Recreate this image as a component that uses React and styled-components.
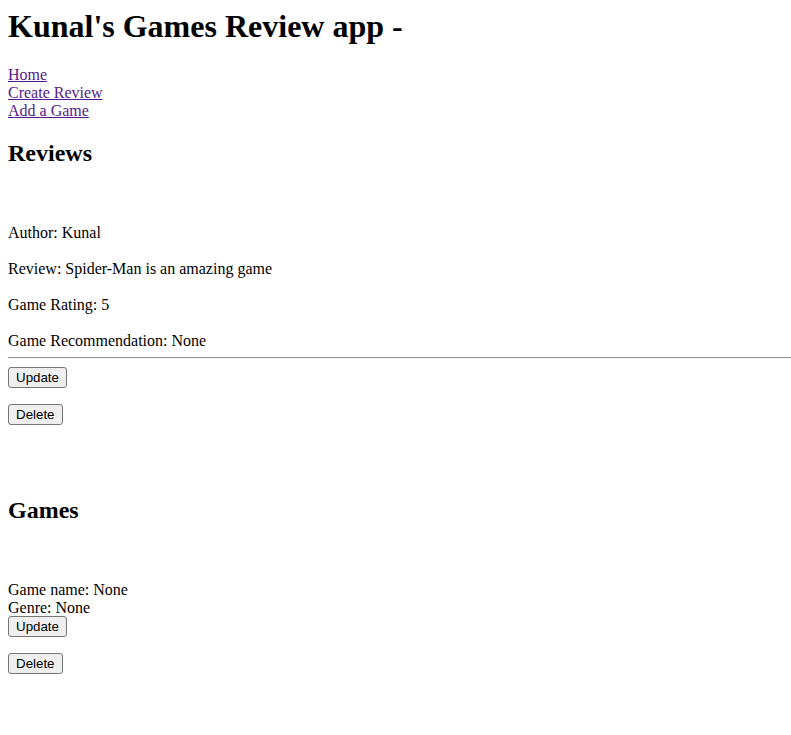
// react imports
import React from 'react';
// styled components import
import styled, { createGlobalStyle } from 'styled-components';

// global styles
const GlobalStyle = createGlobalStyle`
  body {
    margin: 0;
    background: #ffffff;
    color: #000000;
    font-family: "Liberation Serif", "Times New Roman", serif;
    font-size: 16px;
  }
`

// styled components
const Page = styled.div`
  display: flex;
  flex-flow: column nowrap;
  align-items: flex-start;
  padding: 8px 0 8px 8px;
`

const Title = styled.h1`
  margin: 0;
  font-size: 32px;
  line-height: 37px;
  font-weight: bold;
`

const Nav = styled.nav`
  display: flex;
  flex-flow: column nowrap;
  align-items: flex-start;
  margin-top: 20.6px;
`

const NavLink = styled.a`
  color: #551a8b;
  text-decoration: underline;
  line-height: 18px;
`

const SectionTitle = styled.h2`
  margin: ${props => props.$top}px 0 0;
  font-size: 24px;
  line-height: 28px;
  font-weight: bold;
`

const Card = styled.div`
  display: flex;
  flex-flow: column nowrap;
  align-items: flex-start;
  align-self: stretch;
  margin-top: ${props => props.$top}px;
  gap: ${props => props.$gap}px;
`

const Field = styled.p`
  margin: 0;
  line-height: ${props => props.$lh}px;
`

const Divider = styled.hr`
  align-self: stretch;
  margin: 6px 0 0;
  height: 0;
  border: none;
  border-top: 1px solid #9a9a9a;
  border-bottom: 1px solid #eeeeee;
`

const Actions = styled.div`
  display: flex;
  flex-flow: column nowrap;
  align-items: flex-start;
  gap: 16px;
  margin-top: ${props => props.$top}px;
`

const Button = styled.button`
  height: 21px;
  padding: 0 7px;
  background-color: #efefef;
  border: 1px solid #767676;
  border-radius: 3px;
  color: #000000;
  font-family: "Liberation Sans", Arial, sans-serif;
  font-size: 13.333px;
  line-height: 15px;
`

const reviews = [
  { author: 'Kunal', review: 'Spider-Man is an amazing game', rating: 5, recommendation: 'None' }
]

const games = [
  { name: 'None', genre: 'None' }
]

const App = () => {
  return (
    <>
      <GlobalStyle />
      <Page>
        <Title>Kunal's Games Review app -</Title>
        <Nav>
          <NavLink href="#">Home</NavLink>
          <NavLink href="#">Create Review</NavLink>
          <NavLink href="#">Add a Game</NavLink>
        </Nav>

        <SectionTitle $top={19.3}>Reviews</SectionTitle>
        {reviews.map((r, i) => (
          <Card key={i} $top={56} $gap={0}>
            <Card $top={0} $gap={16}>
              <Field $lh={20}>Author: {r.author}</Field>
              <Field $lh={20}>Review: {r.review}</Field>
              <Field $lh={20}>Game Rating: {r.rating}</Field>
              <Field $lh={20}>Game Recommendation: {r.recommendation}</Field>
            </Card>
            <Divider />
            <Actions $top={8}>
              <Button>Update</Button>
              <Button>Delete</Button>
            </Actions>
          </Card>
        ))}

        <SectionTitle $top={71.1}>Games</SectionTitle>
        {games.map((g, i) => (
          <Card key={i} $top={56.6} $gap={0}>
            <Field $lh={18}>Game name: {g.name}</Field>
            <Field $lh={18}>Genre: {g.genre}</Field>
            <Actions $top={-0.5}>
              <Button>Update</Button>
              <Button>Delete</Button>
            </Actions>
          </Card>
        ))}
      </Page>
    </>
  );
};

export default App;
